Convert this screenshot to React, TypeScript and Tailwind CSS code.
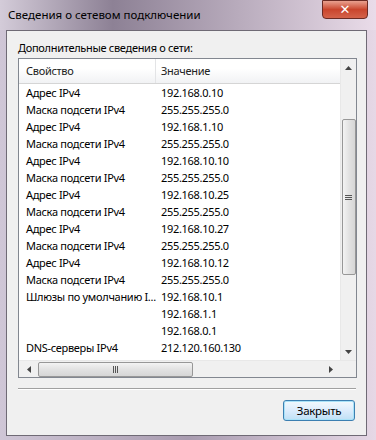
const rows: [string, string][] = [
  ["Адрес IPv4", "192.168.0.10"],
  ["Маска подсети IPv4", "255.255.255.0"],
  ["Адрес IPv4", "192.168.1.10"],
  ["Маска подсети IPv4", "255.255.255.0"],
  ["Адрес IPv4", "192.168.10.10"],
  ["Маска подсети IPv4", "255.255.255.0"],
  ["Адрес IPv4", "192.168.10.25"],
  ["Маска подсети IPv4", "255.255.255.0"],
  ["Адрес IPv4", "192.168.10.27"],
  ["Маска подсети IPv4", "255.255.255.0"],
  ["Адрес IPv4", "192.168.10.12"],
  ["Маска подсети IPv4", "255.255.255.0"],
  ["Шлюзы по умолчанию I...", "192.168.10.1"],
  ["", "192.168.1.1"],
  ["", "192.168.0.1"],
  ["DNS-серверы IPv4", "212.120.160.130"],
  ["", "212.120.178.34"],
];

export default function App() {
  return (
    <div
      className="relative w-[376px] h-[440px] overflow-hidden bg-gradient-to-r from-[#cfc6d6] via-[#a99cb0] to-[#e6d8e6] text-black"
      style={{ fontFamily: '"Noto Sans", "Liberation Sans", sans-serif' }}
    >
      {/* Title bar */}
      <div className="h-[30px] flex items-center pl-[8px] bg-gradient-to-r from-[#d4ccd9] via-[#8d8195] via-30% to-[#eadce9]">
        <span className="text-[11.5px] text-black">Сведения о сетевом подключении</span>
      </div>
      <div className="absolute top-0 right-[8px] w-[46px] h-[19px] rounded-b-[4px] border border-[#6b2b24] bg-gradient-to-b from-[#e8a08f] via-[#c9452d] to-[#d4624a] flex items-center justify-center">
        <span className="text-white font-bold text-[13px] leading-none" style={{ fontFamily: '"DejaVu Sans", sans-serif' }}>✕</span>
      </div>

      {/* Client area */}
      <div className="absolute left-[6px] top-[30px] w-[361px] h-[406px] border border-[#6f6a75] bg-[#f0f0f0] flex flex-col px-[11px] text-[11px] tracking-[-0.3px]">
        <div className="h-[27px] pt-[8px] leading-[17px]">Дополнительные сведения о сети:</div>

        {/* List view */}
        <div className="w-[339px] h-[320px] border border-[#828790] bg-white flex flex-col">
          <div className="flex flex-1 min-h-0">
            <div className="flex-1 flex flex-col min-w-0">
              <div className="h-[25px] flex border-b border-[#d5d5d5] bg-gradient-to-b from-white from-40% to-[#f1f2f4]">
                <div className="w-[137px] pl-[7px] pt-[4px] border-r border-[#e3e4e6] text-[#222]">Свойство</div>
                <div className="flex-1 pl-[5px] pt-[4px] text-[#222]">Значение</div>
              </div>
              <div className="flex-1 overflow-hidden">
                {rows.map(([k, v], i) => (
                  <div key={i} className="h-[17px] flex items-center leading-[17px] whitespace-nowrap">
                    <div className="w-[137px] pl-[7px] overflow-hidden">{k}</div>
                    <div className="pl-[5px]">{v}</div>
                  </div>
                ))}
              </div>
            </div>
            {/* Vertical scrollbar */}
            <div className="w-[16px] bg-[#f0f0f0] border-l border-[#e8e8e8] flex flex-col items-center">
              <div className="h-[17px] flex items-center justify-center">
                <svg width="7" height="4" viewBox="0 0 7 4"><path d="M3.5 0 L7 4 L0 4 Z" fill="#444" /></svg>
              </div>
              <div className="h-[43px]" />
              <div className="w-[14px] h-[156px] rounded-[2px] border border-[#979797] bg-gradient-to-r from-[#f3f3f3] via-[#e2e2e2] to-[#d6d6d6] flex items-center justify-center">
                <div className="flex flex-col gap-[1px]">
                  <div className="w-[7px] h-[1px] bg-[#555]" />
                  <div className="w-[7px] h-[1px] bg-[#555]" />
                  <div className="w-[7px] h-[1px] bg-[#555]" />
                </div>
              </div>
              <div className="flex-1" />
              <div className="h-[17px] flex items-center justify-center">
                <svg width="7" height="4" viewBox="0 0 7 4"><path d="M0 0 L7 0 L3.5 4 Z" fill="#444" /></svg>
              </div>
            </div>
          </div>
          {/* Horizontal scrollbar */}
          <div className="h-[17px] flex bg-[#f0f0f0] border-t border-[#e8e8e8]">
            <div className="flex-1 flex items-center">
              <div className="w-[19px] flex items-center justify-center">
                <svg width="4" height="7" viewBox="0 0 4 7"><path d="M0 3.5 L4 0 L4 7 Z" fill="#444" /></svg>
              </div>
              <div className="w-[155px] h-[15px] rounded-[2px] border border-[#979797] bg-gradient-to-b from-[#f3f3f3] via-[#e2e2e2] to-[#d6d6d6] flex items-center justify-center">
                <div className="flex gap-[1px]">
                  <div className="w-[1px] h-[7px] bg-[#555]" />
                  <div className="w-[1px] h-[7px] bg-[#555]" />
                  <div className="w-[1px] h-[7px] bg-[#555]" />
                </div>
              </div>
              <div className="flex-1" />
              <div className="w-[19px] flex items-center justify-center">
                <svg width="4" height="7" viewBox="0 0 4 7"><path d="M4 3.5 L0 0 L0 7 Z" fill="#444" /></svg>
              </div>
            </div>
            <div className="w-[16px] bg-[#f0f0f0]" />
          </div>
        </div>

        {/* Separator */}
        <div className="mt-[10px] h-[2px] w-[338px] border-t border-[#a0a0a0] border-b border-b-white" />

        <div className="flex justify-end mt-[10px]">
          <button className="w-[72px] h-[21px] rounded-[3px] border border-[#3c7fb1] bg-gradient-to-b from-[#f2f9fd] via-[#dcecfc] to-[#bfe0f5] shadow-[inset_0_0_0_1px_#a9e2f8] text-[11.5px] text-black leading-none">
            Закрыть
          </button>
        </div>
      </div>
    </div>
  );
}
